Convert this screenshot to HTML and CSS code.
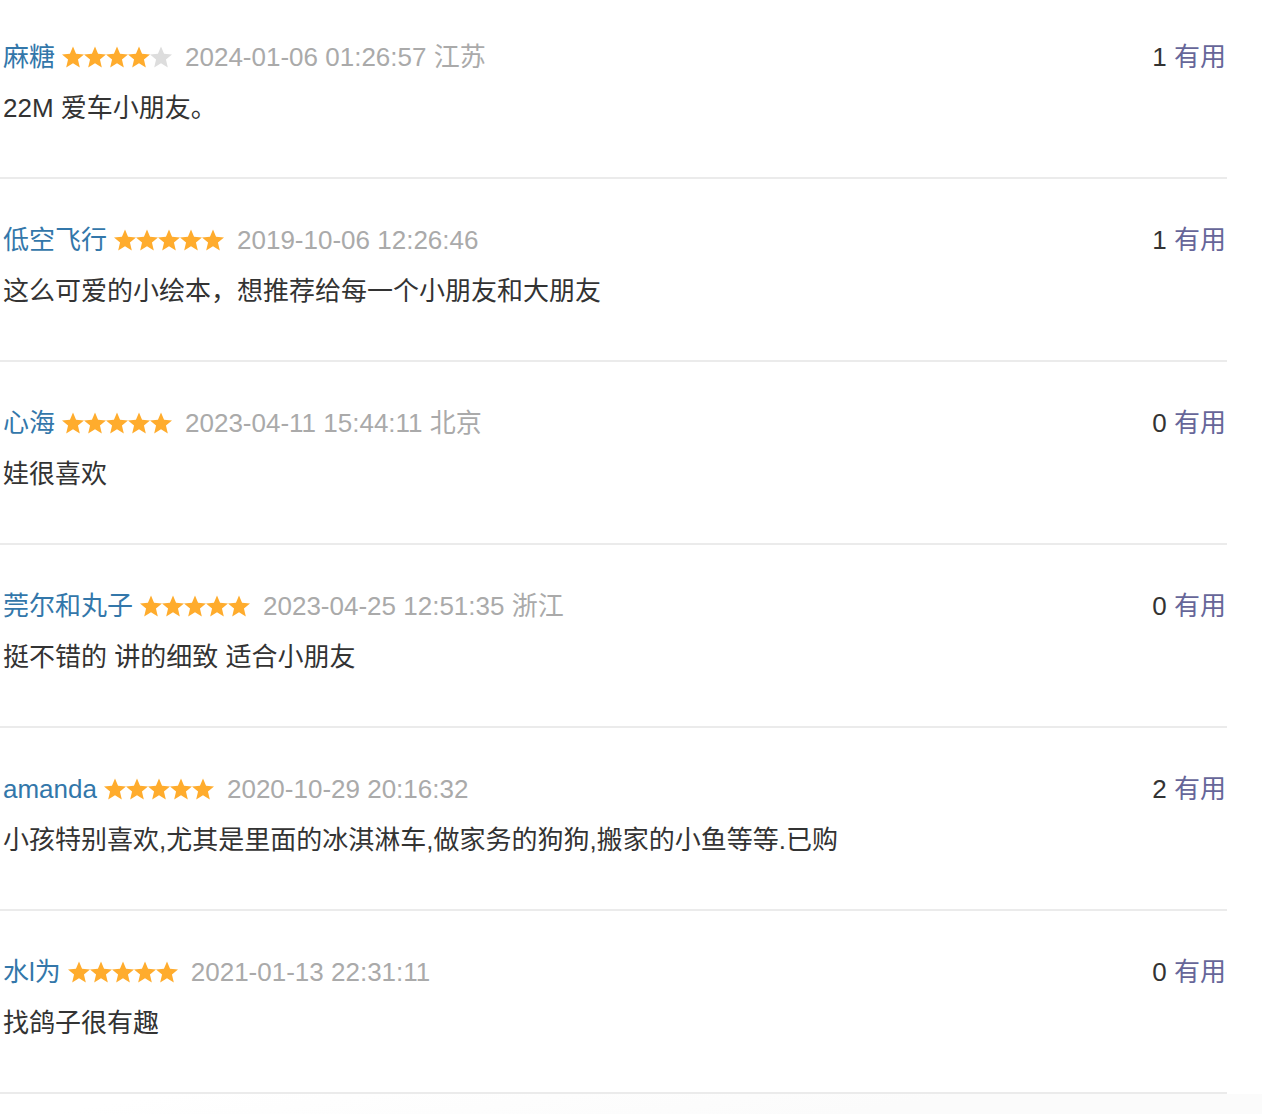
FILE: index.html
```html
<!DOCTYPE html>
<html lang="zh-CN">
<head>
<meta charset="utf-8">
<title>短评</title>
<link rel="stylesheet" href="styles.css">
</head>
<body>
<svg width="0" height="0" class="defs" aria-hidden="true">
  <defs>
    <symbol id="star" viewBox="0 0 22 22">
      <path d="M11 0.4L14.06 7.79L22 8.42L15.95 13.61L17.82 21.38L11 17.2L4.18 21.38L6.05 13.61L0 8.42L7.94 7.79Z"/>
    </symbol>
  </defs>
</svg>
<main class="comments">
  <div class="item">
    <div class="head">
      <span class="info">
        <a class="name">麻糖</a>
        <span class="stars"><svg class="on"><use href="#star"/></svg><svg class="on"><use href="#star"/></svg><svg class="on"><use href="#star"/></svg><svg class="on"><use href="#star"/></svg><svg class="off"><use href="#star"/></svg></span>
        <span class="time">2024-01-06 01:26:57 江苏</span>
      </span>
      <span class="vote"><span class="count">1</span> <a class="useful">有用</a></span>
    </div>
    <p class="text">22M 爱车小朋友。</p>
  </div>
  <div class="item">
    <div class="head">
      <span class="info">
        <a class="name">低空飞行</a>
        <span class="stars"><svg class="on"><use href="#star"/></svg><svg class="on"><use href="#star"/></svg><svg class="on"><use href="#star"/></svg><svg class="on"><use href="#star"/></svg><svg class="on"><use href="#star"/></svg></span>
        <span class="time">2019-10-06 12:26:46</span>
      </span>
      <span class="vote"><span class="count">1</span> <a class="useful">有用</a></span>
    </div>
    <p class="text">这么可爱的小绘本，想推荐给每一个小朋友和大朋友</p>
  </div>
  <div class="item">
    <div class="head">
      <span class="info">
        <a class="name">心海</a>
        <span class="stars"><svg class="on"><use href="#star"/></svg><svg class="on"><use href="#star"/></svg><svg class="on"><use href="#star"/></svg><svg class="on"><use href="#star"/></svg><svg class="on"><use href="#star"/></svg></span>
        <span class="time">2023-04-11 15:44:11 北京</span>
      </span>
      <span class="vote"><span class="count">0</span> <a class="useful">有用</a></span>
    </div>
    <p class="text">娃很喜欢</p>
  </div>
  <div class="item">
    <div class="head">
      <span class="info">
        <a class="name">莞尔和丸子</a>
        <span class="stars"><svg class="on"><use href="#star"/></svg><svg class="on"><use href="#star"/></svg><svg class="on"><use href="#star"/></svg><svg class="on"><use href="#star"/></svg><svg class="on"><use href="#star"/></svg></span>
        <span class="time">2023-04-25 12:51:35 浙江</span>
      </span>
      <span class="vote"><span class="count">0</span> <a class="useful">有用</a></span>
    </div>
    <p class="text">挺不错的 讲的细致 适合小朋友</p>
  </div>
  <div class="item">
    <div class="head">
      <span class="info">
        <a class="name">amanda</a>
        <span class="stars"><svg class="on"><use href="#star"/></svg><svg class="on"><use href="#star"/></svg><svg class="on"><use href="#star"/></svg><svg class="on"><use href="#star"/></svg><svg class="on"><use href="#star"/></svg></span>
        <span class="time">2020-10-29 20:16:32</span>
      </span>
      <span class="vote"><span class="count">2</span> <a class="useful">有用</a></span>
    </div>
    <p class="text">小孩特别喜欢,尤其是里面的冰淇淋车,做家务的狗狗,搬家的小鱼等等.已购</p>
  </div>
  <div class="item">
    <div class="head">
      <span class="info">
        <a class="name">水l为</a>
        <span class="stars"><svg class="on"><use href="#star"/></svg><svg class="on"><use href="#star"/></svg><svg class="on"><use href="#star"/></svg><svg class="on"><use href="#star"/></svg><svg class="on"><use href="#star"/></svg></span>
        <span class="time">2021-01-13 22:31:11</span>
      </span>
      <span class="vote"><span class="count">0</span> <a class="useful">有用</a></span>
    </div>
    <p class="text">找鸽子很有趣</p>
  </div>
</main>
<div class="footer-fade"></div>
</body>
</html>
```

FILE: styles.css
```css
html, body {
  margin: 0;
  padding: 0;
  background: #fff;
}
body {
  font-family: "Liberation Sans", "Noto Sans CJK SC", sans-serif;
  font-size: 26px;
  color: #333;
}
.defs {
  position: absolute;
  width: 0;
  height: 0;
}
.comments {
  width: 1227px;
}
.item {
  padding: 41px 1px 49px 3px;
  border-bottom: 2px solid #ebebeb;
}
.item:first-child {
  padding-top: 37px;
}
.head {
  display: flex;
  justify-content: space-between;
  align-items: center;
  height: 40px;
  line-height: 40px;
}
.info {
  display: flex;
  align-items: center;
  gap: 8px;
}
.name {
  color: #3377aa;
}
.stars {
  display: flex;
  align-items: center;
  gap: 0;
  margin-left: -1px;
}
.stars svg {
  width: 22px;
  height: 22px;
  overflow: visible;
}
.stars .on {
  fill: #ffac2d;
}
.stars .off {
  fill: #dddddd;
}
.time {
  color: #aaa;
  margin-left: 5px;
}
.vote {
  white-space: pre;
}
.count {
  color: #333;
}
.useful {
  color: #666699;
}
.text {
  margin: 11px 0 0;
  line-height: 40px;
  color: #333;
}
.footer-fade {
  height: 60px;
  background: linear-gradient(170deg, #fff 10%, #fbfbfb 60%);
}
```
